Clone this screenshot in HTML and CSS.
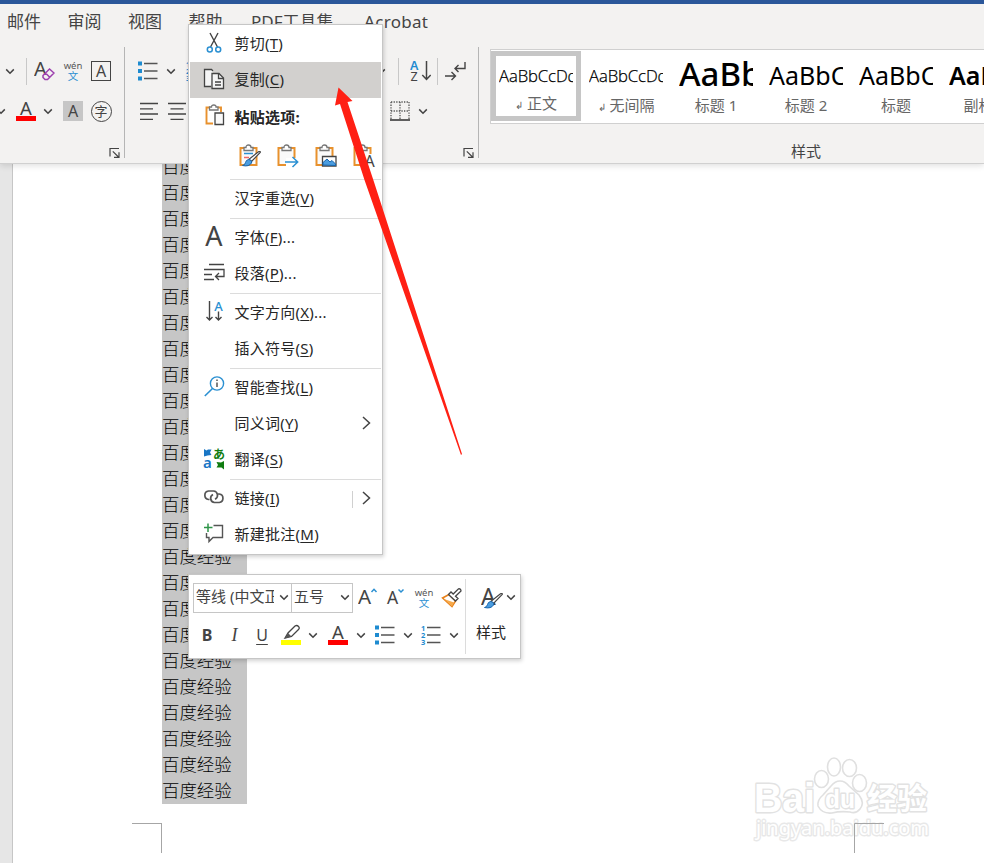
FILE: index.html
```html
<!DOCTYPE html>
<html lang="zh-CN">
<head>
<meta charset="utf-8">
<title>Word</title>
<link rel="stylesheet" href="styles.css">
</head>
<body>
<svg class="defs" width="0" height="0">
  <symbol id="chev" viewBox="0 0 10 7"><path d="M1.2 1.4 5 5.2 8.8 1.4" fill="none" stroke="#444" stroke-width="1.5"/></symbol>
  <symbol id="right" viewBox="0 0 9 14"><path d="M1 1 7.5 7 1 13" fill="none" stroke="#444" stroke-width="1.5"/></symbol>
  <symbol id="launch" viewBox="0 0 12 12"><path d="M1 9.5V1.5H10M3.8 4.3 9.5 10M10 5.3V10.3H5" fill="none" stroke="#444" stroke-width="1.2"/></symbol>
  <symbol id="bullets" viewBox="0 0 20 20"><path d="M0 .5h4v4H0zM0 8h4v4H0zM0 15.500h4v4H0z" fill="#1e8bd0"/><path d="M6 2.500h13.500M6 10h13.500M6 17.500h13.500" stroke="#555" stroke-width="1.300"/></symbol>
  <symbol id="numbers" viewBox="0 0 20 20"><g fill="#1e8bd0" font-family="Noto Sans" font-size="7.500" font-weight="700"><text x="0" y="5.500">1</text><text x="0" y="12.800">2</text><text x="0" y="20">3</text></g><path d="M6 2.500h13.500M6 10h13.500M6 17.500h13.500" stroke="#555" stroke-width="1.300"/></symbol>
  <symbol id="fontcolor" viewBox="0 0 20 22"><text x="10" y="15" text-anchor="middle" font-family="Noto Sans" font-size="18.500" fill="#444">A</text><path d="M0 16h20v5H0z" fill="#f00"/></symbol>
  <symbol id="pinyin" viewBox="0 0 20 22"><text x="10" y="9" text-anchor="middle" font-family="Noto Sans" font-size="9.500" fill="#555">wén</text><text x="10" y="20" text-anchor="middle" font-family="Noto Sans CJK SC" font-size="10.500" fill="#2b90d2">文</text></symbol>
  <symbol id="clip" viewBox="0 0 22 24"><path d="M5 4H1.500V21H17.500V4H14" fill="#fafafa" stroke="#e8912d" stroke-width="2"/><path d="M5 6.500V3.500H7Q7 1 9.500 1T12 3.500H14V6.500Z" fill="#fff" stroke="#777" stroke-width="1.300"/></symbol>
  <symbol id="brush" viewBox="0 0 19 16"><path d="M18.300 1.300 9.500 10.500 7 8.300 16.500.8Q18.500-.2 18.300 1.300Z" fill="#fff" stroke="#444" stroke-width="1.200"/><path d="M6.500 8.500Q10.500 9 9.500 12 7 16 .5 14.500 3 14 3.500 11.500 4 9 6.500 8.500Z" fill="#4b9de0" stroke="#1765ad"/></symbol>
</svg>
<div class="app">
  <header class="ribbon">
    <nav class="tabs"><span>邮件</span><span>审阅</span><span>视图</span><span>帮助</span><span class="pdf">PDF工具集</span><span>Acrobat</span></nav>
    <div class="groups">
      <section class="group font-group">
        <div class="row font-top">
          <svg width="10" height="7"><use href="#chev"/></svg>
          <i class="vsep"></i>
          <svg width="21" height="22" viewBox="0 0 21 22"><text x="0" y="16" font-family="Noto Sans" font-size="20" fill="#444">A</text><path d="M9 15.500 15.500 9l4.500 4-6.500 6.500H11L9 17.500ZM11.500 13l4.500 4.500" fill="#f3f2f1" stroke="#9c3fae" stroke-width="1.500"/></svg>
          <svg width="20" height="22"><use href="#pinyin"/></svg>
          <span class="boxed">A</span>
        </div>
        <div class="row font-bottom">
          <svg class="cut" width="10" height="7"><use href="#chev"/></svg>
          <svg width="20" height="22"><use href="#fontcolor"/></svg>
          <svg width="10" height="7"><use href="#chev"/></svg>
          <span class="shaded">A</span>
          <span class="circled">字</span>
        </div>
        <svg class="launcher" width="12" height="12"><use href="#launch"/></svg>
      </section>
      <section class="group para-group">
        <div class="row para-top">
          <svg width="20" height="20"><use href="#bullets"/></svg>
          <svg width="10" height="7"><use href="#chev"/></svg>
          <svg class="num" width="20" height="20"><use href="#numbers"/></svg>
          <svg class="more" width="10" height="7"><use href="#chev"/></svg>
          <i class="vsep"></i>
          <svg width="21" height="22" viewBox="0 0 21 22"><g font-family="Noto Sans" font-size="12.500"><text x="0" y="9.500" fill="#1e8bd0" font-weight="600">A</text><text x=".5" y="21" fill="#444">Z</text></g><path d="M16.500 1V19M12.300 15l4.200 4.500 4.200-4.500" fill="none" stroke="#444" stroke-width="1.500"/></svg>
          <i class="vsep"></i>
          <svg width="21" height="20" viewBox="0 0 21 20"><path d="M20 1V7.500H10M13.500 4 10 7.500 13.500 11M0 15H10M6.500 11 10.500 15 6.500 19" fill="none" stroke="#444" stroke-width="1.400"/></svg>
        </div>
        <div class="row para-bottom">
          <svg width="19" height="19" viewBox="0 0 19 19"><path d="M0 1.500h18M0 6.800h13M0 12h18M0 17.300h13" stroke="#444" stroke-width="1.300"/></svg>
          <svg width="19" height="19" viewBox="0 0 19 19"><path d="M0 1.500h18M2.500 6.800h13M0 12h18M2.500 17.300h13" stroke="#444" stroke-width="1.300"/></svg>
          <svg class="borders" width="20" height="20" viewBox="0 0 20 20"><path d="M1 1h18M1 10h18M1 1v17M10 1v17M19 1v17" stroke="#555" stroke-width="1.300" stroke-dasharray="1.300 1.300"/><path d="M0 19h20" stroke="#444" stroke-width="1.700"/></svg>
          <svg width="10" height="7"><use href="#chev"/></svg>
        </div>
        <svg class="launcher" width="12" height="12"><use href="#launch"/></svg>
      </section>
      <section class="styles-group">
        <div class="gallery">
          <div class="style selected"><b class="p-body">AaBbCcDd</b><span><small>↲</small> 正文</span></div>
          <div class="style"><b class="p-body">AaBbCcDd</b><span><small>↲</small> 无间隔</span></div>
          <div class="style"><b class="p-h1">AaBb</b><span>标题 1</span></div>
          <div class="style"><b class="p-h2">AaBbC</b><span>标题 2</span></div>
          <div class="style"><b class="p-h2">AaBbC</b><span>标题</span></div>
          <div class="style"><b class="p-sub">AaBbC</b><span>副标题</span></div>
        </div>
        <div class="group-name">样式</div>
      </section>
    </div>
  </header>
  <main class="workspace">
    <article class="page">
      <div class="selection">
        <p>百度经验</p><p>百度经验</p><p>百度经验</p><p>百度经验</p><p>百度经验</p>
        <p>百度经验</p><p>百度经验</p><p>百度经验</p><p>百度经验</p><p>百度经验</p>
        <p>百度经验</p><p>百度经验</p><p>百度经验</p><p>百度经验</p><p>百度经验</p>
        <p>百度经验</p><p>百度经验</p><p>百度经验</p><p>百度经验</p><p>百度经验</p>
        <p>百度经验</p><p>百度经验</p><p>百度经验</p><p>百度经验</p><p>百度经验</p>
      </div>
      <div class="margins"><i class="corner-l"></i><i class="corner-r"></i></div>
    </article>
  </main>
</div>

<div class="menu">
  <div class="item"><svg width="22" height="22" viewBox="0 0 22 22"><path d="M7 1 14.500 15M15 1 7.500 15" stroke="#444" stroke-width="1.400"/><g fill="none" stroke="#2b90d2" stroke-width="1.500"><circle cx="6.800" cy="17.500" r="2.500"/><circle cx="15.200" cy="17.500" r="2.500"/></g></svg><span>剪切(<u>T</u>)</span></div>
  <div class="item active"><svg width="22" height="22" viewBox="0 0 22 22"><g fill="#f5f5f5" stroke="#444" stroke-width="1.300"><path d="M8 18.500H1.500V1.500H8.500L10 3"/><path d="M9 5.500H16L20.500 10V20.500H9Z"/><path d="M15.500 5.500V10.500H20.500M12 14H18M12 17H18" fill="none"/></g></svg><span>复制(<u>C</u>)</span></div>
  <div class="item heading"><svg width="22" height="22" viewBox="0 0 22 22"><path d="M7 3.500H3.500V19.500H10M15 3.500H18V8" fill="none" stroke="#e8912d" stroke-width="1.900"/><path d="M6.500 6V3H8.500Q8.500 1 10.800 1T13 3H15V6Z" fill="#fff" stroke="#777" stroke-width="1.300"/><path d="M12 9H20.500V20.500H12Z" fill="#fafafa" stroke="#444" stroke-width="1.300"/></svg><span>粘贴选项:</span></div>
  <div class="paste">
    <svg width="23" height="24"><use href="#clip" width="22" height="24"/><path d="M5 9.500h9" stroke="#2b90d2" stroke-width="1.500"/><path d="M5 13.500h5" stroke="#e66" stroke-width="1.500"/><use href="#brush" x="3" y="7" width="19" height="16"/></svg>
    <svg width="23" height="24"><use href="#clip" width="22" height="24"/><path d="M9 14h13v8H9z" fill="#fff"/><path d="M8 18H20.500M15.500 13 20.700 18 15.500 23" fill="none" stroke="#2b90d2" stroke-width="1.500"/></svg>
    <svg width="23" height="24"><use href="#clip" width="22" height="24"/><path d="M7.500 12.500H21V22H7.500Z" fill="#fff" stroke="#444" stroke-width="1.300"/><path d="M8 21V18.500L12 15 15 18 17 16.500 20.500 20V21.500Z" fill="#4b9de0" stroke="#1765ad"/></svg>
    <svg width="23" height="24"><use href="#clip" width="22" height="24"/><path d="M14 10h8v13h-8z" fill="#fff"/><text x="11.500" y="22.500" font-family="Noto Sans" font-size="16" fill="#444">A</text></svg>
  </div>
  <hr>
  <div class="item"><i></i><span>汉字重选(<u>V</u>)</span></div>
  <hr>
  <div class="item"><svg width="22" height="22" viewBox="0 0 22 22"><text x="11" y="19.500" text-anchor="middle" font-family="Noto Sans" font-size="27" fill="#444">A</text></svg><span>字体(<u>F</u>)...</span></div>
  <div class="item"><svg width="22" height="22" viewBox="0 0 22 22"><path d="M6 2.500H21M1 7.500H21V14.500H12.500M16 11 12.500 14.500 16 18M1 12.500H9M1 17.500H11" fill="none" stroke="#444" stroke-width="1.300"/></svg><span>段落(<u>P</u>)...</span></div>
  <hr>
  <div class="item"><svg width="22" height="22" viewBox="0 0 22 22"><path d="M6.500 0V19M3.500 16 6.500 19 9.500 16M15.500 10.500V19M12.500 16 15.500 19 18.500 16" fill="none" stroke="#444" stroke-width="1.400"/><text x="11.200" y="9.500" font-family="Noto Sans" font-size="13" font-weight="500" fill="#2b90d2">A</text></svg><span>文字方向(<u>X</u>)...</span></div>
  <div class="item"><i></i><span>插入符号(<u>S</u>)</span></div>
  <hr>
  <div class="item"><svg width="22" height="22" viewBox="0 0 22 22"><circle cx="14" cy="7.500" r="6.600" fill="none" stroke="#2b90d2" stroke-width="1.400"/><path d="M9.500 12.500 1.800 20" stroke="#2b90d2" stroke-width="1.600"/><path d="M14 6.500v4.500M14 3.500v1.500" stroke="#555" stroke-width="1.500"/></svg><span>智能查找(<u>L</u>)</span></div>
  <div class="item"><i></i><span>同义词(<u>Y</u>)</span><svg class="arrow" width="9" height="14"><use href="#right"/></svg></div>
  <div class="item"><svg width="22" height="22" viewBox="0 0 22 22"><path d="M1 1 3.500 2.500 5 1.500H8.500L7 4.500 8.500 7 4.500 7.500 1 8.500Z" fill="#1976c5"/><path d="M21 21.500 18.500 19.500H13.500L15 17 13.500 14 18 14.500 21 13Z" fill="#107c10"/><text x="0" y="20" font-family="Noto Sans" font-size="15" font-weight="600" fill="#1976c5">a</text><text x="10" y="10.500" font-family="Noto Sans CJK JP" font-size="12" font-weight="700" fill="#107c10">あ</text></svg><span>翻译(<u>S</u>)</span></div>
  <hr>
  <div class="item"><svg width="22" height="22" viewBox="0 0 22 22"><path d="M6.500 12.500H5.500A4.300 4.300 0 0 1 5.500 4H10.500A4.300 4.300 0 0 1 12 12.200M15 7H16.300A4.300 4.300 0 0 1 16.300 15.500H11.500A4.300 4.300 0 0 1 10 7.400" fill="none" stroke="#555" stroke-width="1.700"/></svg><span>链接(<u>I</u>)</span><i class="split"></i><svg class="arrow" width="9" height="14"><use href="#right"/></svg></div>
  <div class="item"><svg width="22" height="22" viewBox="0 0 22 22"><path d="M10.500 2.500H19.500V14.500H10L6 18.500V14.500H3.500V10" fill="none" stroke="#555" stroke-width="1.400"/><path d="M1 4.500H9.500M5 .5V9" stroke="#2e9448" stroke-width="1.500"/></svg><span>新建批注(<u>M</u>)</span></div>
</div>

<div class="mini">
  <div class="mini-main">
    <div class="mini-row mini-top">
      <div class="combo name"><span>等线 (中文正文)</span><svg width="10" height="7"><use href="#chev"/></svg></div>
      <div class="combo size"><span>五号</span><svg width="10" height="7"><use href="#chev"/></svg></div>
      <svg width="20" height="22" viewBox="0 0 20 22"><text x="0" y="17" font-family="Noto Sans" font-size="20.500" fill="#444">A</text><path d="M13.500 5 16 2.300 18.500 5" fill="none" stroke="#2b90d2" stroke-width="1.500"/></svg>
      <svg width="20" height="22" viewBox="0 0 20 22"><text x="1" y="17" font-family="Noto Sans" font-size="17.500" fill="#444">A</text><path d="M12.500 2.500 15 5 17.500 2.500" fill="none" stroke="#2b90d2" stroke-width="1.500"/></svg>
      <svg width="20" height="22"><use href="#pinyin"/></svg>
      <svg width="21" height="22" viewBox="0 0 21 22"><path d="M8 7.500 14.500 14 11 19.500 1.500 11Z" fill="#fff" stroke="#e8811a" stroke-width="1.500"/><path d="M3 12 13 15.500 11 19.500Z" fill="#f6a94b"/><path d="M7.500 7.500 10 5 12.200 7 17.500 1.800Q20 1.500 20 4L14.500 9.200 17 11.500 14.500 14Z" fill="#fff" stroke="#444" stroke-width="1.300"/></svg>
    </div>
    <div class="mini-row mini-bottom">
      <b class="bold">B</b><em>I</em><span class="under">U</span>
      <svg width="20" height="22" viewBox="0 0 20 22"><path d="M4 14 7 9 14 2Q16 .8 17.500 2.500T17.500 5.500L10.500 12.500Z" fill="#fff" stroke="#444" stroke-width="1.300"/><path d="M4 14.500 7 9 10.500 12.500Z" fill="#555"/><path d="M0 16h20v5H0z" fill="#ff0"/></svg>
      <svg width="10" height="7"><use href="#chev"/></svg>
      <svg width="20" height="22"><use href="#fontcolor"/></svg>
      <svg width="10" height="7"><use href="#chev"/></svg>
      <svg width="20" height="20"><use href="#bullets"/></svg>
      <svg width="10" height="7"><use href="#chev"/></svg>
      <svg width="20" height="20"><use href="#numbers"/></svg>
      <svg width="10" height="7"><use href="#chev"/></svg>
    </div>
  </div>
  <div class="mini-styles">
    <div class="mini-style-icon"><svg width="22" height="24" viewBox="0 0 22 24"><text x="0" y="18.500" font-family="Noto Sans" font-size="23" fill="#444">A</text><use href="#brush" x="3" y="7" width="19" height="16"/></svg><svg width="10" height="7"><use href="#chev"/></svg></div>
    <span>样式</span>
  </div>
</div>

<svg class="watermark" width="190" height="90" viewBox="0 0 190 90">
  <g fill="#fff" stroke="#e0e0e0" stroke-width="1.600" stroke-linejoin="round">
    <ellipse cx="68.500" cy="24" rx="7" ry="8.500"/><ellipse cx="81" cy="12" rx="6.500" ry="9"/><ellipse cx="96.500" cy="13" rx="7" ry="8.500"/><ellipse cx="106.500" cy="28" rx="7" ry="8.500"/>
    <path d="M87 26Q92 26 96 31L106 40Q112 48 107 54 103 59 97 57 87 56 79 58 69 59 65 51 64 45 70 40L78 31Q82 26 87 26Z"/>
  </g>
  <g class="halo">
    <text x="1" y="57" font-family="Liberation Sans" font-weight="700" font-size="40" textLength="61" lengthAdjust="spacingAndGlyphs">Bai</text>
    <text x="72" y="53" font-family="Liberation Sans" font-weight="700" font-size="25" textLength="30" lengthAdjust="spacingAndGlyphs">du</text>
    <text x="114" y="54" font-family="Noto Sans CJK SC" font-weight="700" font-size="30">经验</text>
    <text class="url" x="3" y="80" font-family="Noto Sans" font-size="20" textLength="173">jingyan.baidu.com</text>
  </g>
  <path d="M101.500 89V68.500H131" fill="none" stroke="#a6a6a6"/>
</svg>
<svg class="pointer" width="140" height="380" viewBox="330 80 140 380"><path d="M338.500 87.500 352.500 101 347.500 102 374 182 462 454 461 455 364.500 180 340 104 335 105.500Z" fill="#ff2014"/></svg>
</body>
</html>
```

FILE: styles.css
```css
* { box-sizing: border-box; }
body { margin: 0; width: 984px; height: 863px; overflow: hidden; position: relative; font-family: "Noto Sans", "Noto Sans CJK SC", sans-serif; font-size: 15px; color: #262626; }
svg { display: block; flex: none; }
.defs { position: absolute; }
.app { display: flex; flex-direction: column; height: 863px; }
.ribbon { height: 164px; flex: none; background: #f3f2f1; border-top: 4px solid #2b579a; border-bottom: 1px solid #d0d0d0; overflow: hidden; position: relative; z-index: 1; box-shadow: 0 2px 6px rgba(0,0,0,.12); }
.tabs { display: flex; height: 43px; padding: 6px 0 0 7px; gap: 26.500px; font-size: 17px; line-height: 24px; color: #444; white-space: nowrap; }
.pdf { margin: 0 4px 0 2px; }
.tabs > :last-child { letter-spacing: .3px; }
.groups { display: flex; height: 111px; }
.group { display: flex; flex-direction: column; border-right: 1px solid #b5b5b5; height: 111px; flex: none; }
.font-group { width: 125px; }
.para-group { width: 354px; }
.row { display: grid; align-items: center; justify-items: center; height: 40px; flex: none; }
.row:first-child { height: 44px; padding-top: 4px; }
.font-top { grid-template-columns: 19px 15px 21px 36px 20px; }
.font-bottom { grid-template-columns: 16px 20px 24px 26px 30px; }
.cut { justify-self: start; margin-left: -4px; }
.vsep { width: 1px; height: 27px; background: #c8c8c8; }
.para-top { grid-template-columns: 20px 26px 28px 174px 25px 19px 14px 23px; padding-left: 13px; }
.num { justify-self: start; margin-left: 2px; }
.more { justify-self: end; }
.para-bottom { grid-template-columns: 19px 37px 214px 25px; padding-left: 15px; }
.borders { justify-self: end; }
.boxed, .shaded, .circled { display: grid; place-items: center; width: 20px; height: 20px; font-size: 16px; line-height: 16px; color: #444; }
.boxed { border: 1.500px solid #444; }
.shaded { background: #c6c6c6; }
.circled { width: 21px; height: 21px; border: 1.300px solid #444; border-radius: 50%; font-size: 13px; }
.launcher { align-self: flex-end; margin: 16px 3px 0 0; }
.styles-group { width: 643px; flex: none; padding: 2px 0 0 11px; display: flex; flex-direction: column; }
.gallery { display: flex; flex: none; height: 75px; border: 1px solid #d0d0d0; background: #fff; padding-top: 1px; overflow: hidden; }
.style { width: 90px; height: 70px; flex: none; padding: 5px 8px 0; display: flex; flex-direction: column; align-items: center; color: #666; }
.style.selected { border: 5px solid #c6c6c6; padding: 0 3px; }
.style b { display: block; width: 74px; height: 38px; line-height: 38px; font-weight: 400; color: #000; overflow: hidden; white-space: nowrap; }
.style span { line-height: 22px; white-space: nowrap; }
.style.selected span { margin-top: 1px; }
.style small { font-size: 10px; }
.style .p-body { font-family: "Open Sans", "Noto Sans", sans-serif; font-weight: 300; font-size: 16.700px; letter-spacing: -.1px; line-height: 39px; -webkit-text-stroke: .25px #000; }
.style .p-h1 { font-size: 33px; font-weight: 500; line-height: 35px; }
.p-h2 { font-size: 25px; }
.style .p-sub { font-size: 25px; font-weight: 600; }
.group-name { text-align: center; color: #444; line-height: 20px; margin-top: 17px; }
.workspace { flex: 1; min-height: 0; background: #e6e6e6; padding-left: 12px; overflow: hidden; }
.page { height: 100%; background: #fff; border-left: 1px solid #c6c6c6; display: flex; flex-direction: column; }
.selection { margin: -10px 0 0 149px; width: 85px; flex: none; background: #c6c6c6; color: #000; font-size: 17.450px; }
.selection p { margin: 0; height: 26px; line-height: 23px; font-family: "Noto Sans CJK SC", sans-serif; font-weight: 300; }
.margins { display: flex; justify-content: space-between; width: 752px; margin: 19px 0 0 119px; }
.corner-l, .corner-r { width: 30px; height: 30px; border-top: 1px solid #a6a6a6; }
.corner-l { border-right: 1px solid #a6a6a6; }
.corner-r { border-left: 1px solid #a6a6a6; }
.menu { position: absolute; z-index: 2; left: 188px; top: 24px; width: 195px; height: 531px; padding: 1px 1px 0; background: #fff; border: 1px solid #c6c6c6; box-shadow: 1px 2px 4px rgba(0,0,0,.18); }
.item { display: flex; align-items: center; height: 36px; padding: 0 10px 0 13px; white-space: nowrap; }
.item > :first-child { width: 22px; margin-right: 9.500px; margin-top: -3px; flex: none; }
.item span { line-height: 22px; margin-top: -2px; letter-spacing: .25px; }
.item u { text-underline-offset: 2px; text-decoration-thickness: 1px; }
.active { background: #d2d0ce; }
.heading { font-weight: 700; }
.item.heading span { margin-top: 1px; }
.arrow { margin-left: auto; margin-top: -3px; }
.split { width: 1px; height: 17px; background: #d0d0d0; margin-left: auto; }
.split + .arrow { margin-left: 9px; }
.paste { display: flex; gap: 15px; height: 44px; padding: 10px 0 0 49px; }
.menu hr { border: 0; height: 1px; background: #dcdcdc; margin: 1px 0 1px 40px; }
.mini { position: absolute; z-index: 2; left: 188px; top: 574px; width: 333px; height: 85px; display: flex; padding: 4px 0; background: #fff; border: 1px solid #c6c6c6; box-shadow: 1px 2px 4px rgba(0,0,0,.18); }
.mini-main { width: 277px; border-right: 1px solid #dcdcdc; }
.mini-row { display: grid; align-items: center; justify-items: center; }
.mini-top { height: 37px; grid-template-columns: 98px 63px 28px 28px 27px 29px; padding: 0 0 0 4px; }
.combo { display: flex; align-items: center; justify-content: space-between; width: 99px; height: 30px; border: 1px solid #c6c6c6; padding: 0 2px; justify-self: start; color: #444; }
.combo span { overflow: hidden; white-space: nowrap; width: 78px; line-height: 22px; margin-top: -3px; }
.combo.size { width: 62px; }
.combo.size span { width: 40px; }
.mini-bottom { height: 38px; grid-template-columns: 28px 27px 28px 30px 14px 35px 11px 37px 9px 38px 8px; padding: 0 0 0 4px; color: #444; font-size: 16px; }
.bold { font-size: 16px; }
.mini-bottom em { font-family: "Liberation Serif", serif; font-size: 18px; }
.under { text-decoration: underline; text-underline-offset: 3px; text-decoration-thickness: 1px; }
.mini-styles { flex: 1; display: flex; flex-direction: column; align-items: center; padding-top: 6px; }
.mini-style-icon { display: flex; align-items: center; gap: 3px; margin-left: 10px; height: 26px; }
.mini-style-icon > :last-child { margin-top: -2px; }
.mini-styles > span { line-height: 22px; margin: 10px 4px 0 0; }
.watermark { position: absolute; left: 753px; top: 755px; }
.halo { fill: #fff; stroke: #e2e2e2; stroke-width: 2.800px; stroke-linejoin: round; paint-order: stroke; }
.url { stroke: #e8e8e8; }
.pointer { position: absolute; z-index: 3; left: 330px; top: 80px; }
```
